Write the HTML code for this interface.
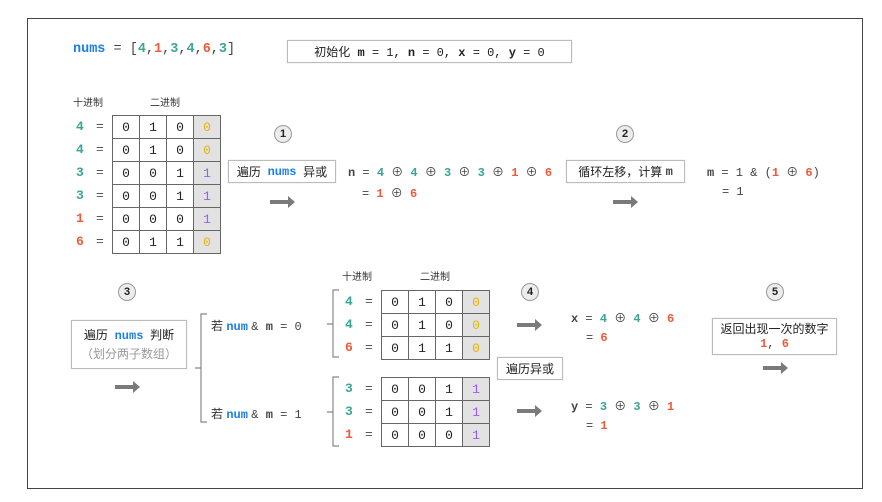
<!DOCTYPE html>
<html><head><meta charset="utf-8"><style>
body{margin:0;width:882px;height:502px;background:#fff;position:relative;overflow:hidden;font-family:"Liberation Sans","Noto Sans CJK SC",sans-serif;color:#333}
.a{position:absolute;white-space:nowrap}
.m{font-family:"Liberation Mono","Noto Sans CJK SC",monospace;font-size:12px;color:#444}
.b{font-weight:bold}
.bl{color:#1a7fe8;font-weight:bold}
.t{color:#3aa597;font-weight:bold}
.r{color:#ee5a3a;font-weight:bold}
.y{color:#e8b400}
.p{color:#9b5cf0}
.box{position:absolute;border:1px solid #bbb;background:#fff;box-shadow:0 0 1px #ccc;box-sizing:border-box;font-size:12px;color:#222;display:flex;align-items:center;justify-content:center;white-space:nowrap}
.c{position:absolute;width:16px;height:16px;border-radius:50%;border:1px solid #999;background:#ececec;font:bold 11px "Liberation Sans",sans-serif;text-align:center;line-height:16px;color:#222;box-sizing:content-box}
table{position:absolute;border-collapse:collapse;font-family:"Liberation Mono",monospace;font-size:13px;color:#222}
td{border:1px solid #666;width:26px;height:22px;padding:0;text-align:center}
td.g{background:#e2e2e2}
.lab{position:absolute;font-size:10px;color:#333}
.rl{position:absolute;height:23px;line-height:23px;font-family:"Liberation Mono",monospace;font-size:13px;color:#555}
.rl b{display:inline-block;width:20px}
</style></head><body>
<div style="position:absolute;left:27px;top:18px;width:834px;height:469px;border:1.5px solid #444"></div>

<div class="a m" style="left:73px;top:42px;font-size:13.5px"><span class="bl">nums</span> = [<span class="t">4</span>,<span class="r">1</span>,<span class="t">3</span>,<span class="t">4</span>,<span class="r">6</span>,<span class="t">3</span>]</div>
<div class="box" style="left:287px;top:40px;width:285px;height:23px"><span class="m" style="color:#222">初始化 <b>m</b> = 1, <b>n</b> = 0, <b>x</b> = 0, <b>y</b> = 0</span></div>

<div class="lab" style="left:73px;top:94px">十进制</div>
<div class="lab" style="left:150px;top:94px">二进制</div>
<table style="left:112px;top:115px">
<tr><td>0</td><td>1</td><td>0</td><td class="g y">0</td></tr>
<tr><td>0</td><td>1</td><td>0</td><td class="g y">0</td></tr>
<tr><td>0</td><td>0</td><td>1</td><td class="g p">1</td></tr>
<tr><td>0</td><td>0</td><td>1</td><td class="g p">1</td></tr>
<tr><td>0</td><td>0</td><td>0</td><td class="g p">1</td></tr>
<tr><td>0</td><td>1</td><td>1</td><td class="g y">0</td></tr>
</table>
<div class="rl" style="left:76px;top:115px"><b class="t">4</b>=</div>
<div class="rl" style="left:76px;top:138px"><b class="t">4</b>=</div>
<div class="rl" style="left:76px;top:161px"><b class="t">3</b>=</div>
<div class="rl" style="left:76px;top:184px"><b class="t">3</b>=</div>
<div class="rl" style="left:76px;top:207px"><b class="r">1</b>=</div>
<div class="rl" style="left:76px;top:230px"><b class="r">6</b>=</div>

<div class="c" style="left:274px;top:125px">1</div>
<div class="box" style="left:228px;top:160px;width:108px;height:23px">遍历&nbsp;&nbsp;<span class="m bl" style="font-size:12px">nums</span>&nbsp;&nbsp;异或</div>
<div class="a m" style="left:348px;top:163px"><b>n</b> = <span class="t">4</span> ⊕ <span class="t">4</span> ⊕ <span class="t">3</span> ⊕ <span class="t">3</span> ⊕ <span class="r">1</span> ⊕ <span class="r">6</span></div>
<div class="a m" style="left:362px;top:184px">= <span class="r">1</span> ⊕ <span class="r">6</span></div>

<div class="c" style="left:616px;top:125px">2</div>
<div class="box" style="left:566px;top:160px;width:119px;height:23px">循环左移，计算&nbsp;<span class="m b">m</span></div>
<div class="a m" style="left:707px;top:163px"><b>m</b> = 1 &amp; (<span class="r">1</span> ⊕ <span class="r">6</span>)</div>
<div class="a m" style="left:722px;top:185px">= 1</div>

<div class="c" style="left:118px;top:283px">3</div>
<div class="box" style="left:71px;top:320px;width:116px;height:49px;flex-direction:column;line-height:18px">
<div>遍历&nbsp;&nbsp;<span class="m bl">nums</span>&nbsp;&nbsp;判断</div><div style="color:#999">（划分两子数组）</div></div>

<div class="a" style="left:211px;top:317px;font-size:12px">若 <span class="m bl">num</span> <span class="m">&amp; <b>m</b> = 0</span></div>
<div class="a" style="left:211px;top:405px;font-size:12px">若 <span class="m bl">num</span> <span class="m">&amp; <b>m</b> = 1</span></div>

<div class="lab" style="left:342px;top:268px">十进制</div>
<div class="lab" style="left:420px;top:268px">二进制</div>
<table style="left:381px;top:290px">
<tr><td>0</td><td>1</td><td>0</td><td class="g y">0</td></tr>
<tr><td>0</td><td>1</td><td>0</td><td class="g y">0</td></tr>
<tr><td>0</td><td>1</td><td>1</td><td class="g y">0</td></tr>
</table>
<table style="left:381px;top:377px">
<tr><td>0</td><td>0</td><td>1</td><td class="g p">1</td></tr>
<tr><td>0</td><td>0</td><td>1</td><td class="g p">1</td></tr>
<tr><td>0</td><td>0</td><td>0</td><td class="g p">1</td></tr>
</table>
<div class="rl" style="left:345px;top:290px"><b class="t">4</b>=</div>
<div class="rl" style="left:345px;top:313px"><b class="t">4</b>=</div>
<div class="rl" style="left:345px;top:336px"><b class="r">6</b>=</div>
<div class="rl" style="left:345px;top:377px"><b class="t">3</b>=</div>
<div class="rl" style="left:345px;top:400px"><b class="t">3</b>=</div>
<div class="rl" style="left:345px;top:423px"><b class="r">1</b>=</div>

<div class="c" style="left:521px;top:283px">4</div>
<div class="box" style="left:497px;top:357px;width:66px;height:23px">遍历异或</div>
<div class="a m" style="left:571px;top:309px"><b>x</b> = <span class="t">4</span> ⊕ <span class="t">4</span> ⊕ <span class="r">6</span></div>
<div class="a m" style="left:586px;top:331px">= <span class="r">6</span></div>
<div class="a m" style="left:571px;top:397px"><b>y</b> = <span class="t">3</span> ⊕ <span class="t">3</span> ⊕ <span class="r">1</span></div>
<div class="a m" style="left:586px;top:419px">= <span class="r">1</span></div>

<div class="c" style="left:766px;top:283px">5</div>
<div class="box" style="left:712px;top:318px;width:125px;height:37px;flex-direction:column;line-height:15px">
<div>返回出现一次的数字</div><div class="m"><span class="r">1</span>, <span class="r">6</span></div></div>

<svg width="882" height="502" style="position:absolute;left:0;top:0" fill="none">
<g stroke="#888" stroke-width="1.2">
<path d="M207 314 H201 V422 H207 M201 368 H195"/>
<path d="M339 290 H333 V357 H339 M333 324 H327"/>
<path d="M339 377 H333 V446 H339 M333 412 H327"/>
</g>
<g fill="#7a7a7a">
<path d="M270 200 H288 V196 L295 202 L288 208 V204 H270Z"/>
<path d="M613 200 H631 V196 L638 202 L631 208 V204 H613Z"/>
<path d="M115 385 H133 V381 L140 387 L133 393 V389 H115Z"/>
<path d="M517 323 H535 V319 L542 325 L535 331 V327 H517Z"/>
<path d="M517 409 H535 V405 L542 411 L535 417 V413 H517Z"/>
<path d="M763 366 H781 V362 L788 368 L781 374 V370 H763Z"/>
</g>
</svg>
</body></html>
